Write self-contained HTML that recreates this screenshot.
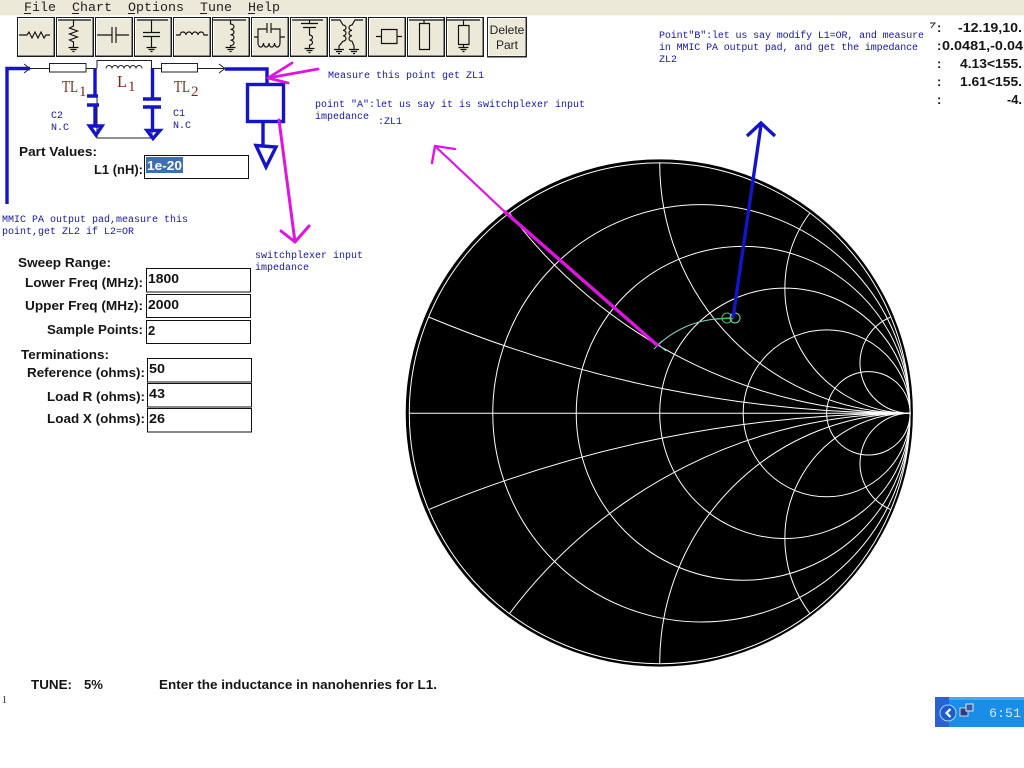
<!DOCTYPE html>
<html><head><meta charset="utf-8"><title>Smith Chart</title>
<style>
html,body{margin:0;padding:0;background:#fff;width:1024px;height:768px;overflow:hidden}
svg{display:block;position:absolute;left:0;top:0}
.m{font:13.33px "Liberation Mono",monospace;fill:#222}
.b{font:10px "Liberation Mono",monospace;fill:#1616a8}
.l{font:bold 13px "Liberation Sans",sans-serif;fill:#151515}
.v{font:bold 13px "Liberation Sans",sans-serif;fill:#111}
.r{font:16.5px "Liberation Serif",serif;fill:#7a2c1c}
.ic{fill:none;stroke:#111;stroke-width:1.15}
.g{fill:none;stroke:#fff;stroke-width:1}
</style></head><body>
<svg width="1024" height="768" viewBox="0 0 1024 768" xmlns="http://www.w3.org/2000/svg">
<defs>
<g id="bt">
<rect x="0" y="0" width="38" height="40" fill="#1a1a1a"/>
<rect x="1" y="1" width="35.5" height="37.5" fill="#fff"/>
<rect x="2" y="2" width="34" height="36" fill="#ece9d8"/>
</g>
</defs>

<!-- menu -->
<rect x="0" y="0" width="1024" height="15.5" fill="#ece9d8"/>
<text class="m" x="24" y="11">File</text><rect x="24" y="13" width="7" height="1" fill="#222"/>
<text class="m" x="72" y="11">Chart</text><rect x="72" y="13" width="7" height="1" fill="#222"/>
<text class="m" x="128" y="11">Options</text><rect x="128" y="13" width="7" height="1" fill="#222"/>
<text class="m" x="200" y="11">Tune</text><rect x="200" y="13" width="7" height="1" fill="#222"/>
<text class="m" x="248" y="11">Help</text><rect x="248" y="13" width="7" height="1" fill="#222"/>

<!-- buttons -->
<use href="#bt" x="17" y="17"/><use href="#bt" x="56" y="17"/><use href="#bt" x="95" y="17"/><use href="#bt" x="134" y="17"/>
<use href="#bt" x="173" y="17"/><use href="#bt" x="212" y="17"/><use href="#bt" x="251" y="17"/><use href="#bt" x="290" y="17"/>
<use href="#bt" x="329" y="17"/><use href="#bt" x="368" y="17"/><use href="#bt" x="407" y="17"/><use href="#bt" x="446" y="17"/>
<rect x="487" y="17" width="40" height="40.5" fill="#222"/><rect x="488" y="18" width="37.5" height="38" fill="#fff"/><rect x="489" y="19" width="36" height="36.5" fill="#ece9d8"/>
<g class="ic">
<path d="M19 35H27l2-3 3 6 3-6 3 6 3-6 3 6 2-3H50"/>
<path d="M58 20H91M73.5 20V26l-4 2 8 3-8 3 8 3-8 3 4 2V47M68.5 47.5H78.5M70.5 49.5H76.5M72.5 51.5H74.5"/>
<path d="M97 35H112M116 35H129M112 27V43M116 27V43"/>
<path d="M137 20H168M151.5 20V32.5M143 32.5H160M143 36.5H160M151.5 36.5V47M146.5 47.5H156.5M148.5 49.5H154.5M150.5 51.5H152.5"/>
<path d="M176 35H180a3 3 0 0 1 6 0a3 3 0 0 1 6 0a3 3 0 0 1 6 0a3 3 0 0 1 6 0H208"/>
<path d="M213 20H246M230.5 20V24a3.5 2.7 0 0 1 0 5.4a3.5 2.7 0 0 1 0 5.4a3.5 2.7 0 0 1 0 5.4a3.5 2.7 0 0 1 0 5.4V47M225.5 47.5H235.5M227.5 49.5H233.5M229.5 51.5H231.5"/>
<path d="M254 37H258M258 43V29H267M267 23V33M271 23V33M271 29H280V43M280 37H285M258 43a2.7 4 0 0 0 5.5 0a2.7 4 0 0 0 5.5 0a2.7 4 0 0 0 5.5 0a2.7 4 0 0 0 5.5 0"/>
<path d="M292 20H323M309.5 20V23.5M301 23.5H318M303 27.5H316M309.5 27.5V35a3 2.5 0 0 1 0 5a3 2.5 0 0 1 0 5V48M304.5 48.5H314.5M306.5 50.5H312.5M308.5 52.5H310.5"/>
<path d="M331 20H340L343 25a3 2.7 0 0 1 0 5.4a3 2.7 0 0 1 0 5.4a3 2.7 0 0 1 0 5.4L339 46V49M334 49.5H344M336 51.5H342M338 53.5H340"/>
<path d="M363 20H355L352 25a3 2.7 0 0 0 0 5.4a3 2.7 0 0 0 0 5.4a3 2.7 0 0 0 0 5.4L354 46V49M349 49.5H359M351 51.5H357M353 53.5H355"/>
<path d="M376 36.5H381M397 36.5H402M381.5 29.5H397V43.5H381.5Z"/>
<path d="M409 20H444M424 20V23.5M419.5 23.5H429.5V49.5H419.5Z"/>
<path d="M447 20H480M463.5 20V25M458.5 25.5H469V44.5H458.5ZM463.5 44.5V47M458.5 47.5H468.5M460.5 49.5H466.5M462.5 51.5H464.5"/>
</g>
<text x="507" y="34" text-anchor="middle" font-family="Liberation Sans, sans-serif" font-size="12" fill="#222">Delete</text>
<text x="507" y="49" text-anchor="middle" font-family="Liberation Sans, sans-serif" font-size="12" fill="#222">Part</text>

<!-- schematic thin -->
<g fill="none" stroke="#222" stroke-width="1">
<path d="M30 68.5H49M86 68.5H97M197 68.5H225M152 68.5H161"/>
<rect x="49.5" y="63.500" width="36.500" height="8.500" fill="#fff"/>
<rect x="161.500" y="63.500" width="36" height="8.500" fill="#fff"/>
<path d="M97 68V60.500H151.500V68M97 96V138H152V130"/>
<path d="M106 68.500a3 3 0 0 1 6 0 3 3 0 0 1 6 0 3 3 0 0 1 6 0 3 3 0 0 1 6 0 3 3 0 0 1 6 0 3 3 0 0 1 6 0"/>
<path d="M219 64L225 68.500 219 73M24 64L30 68.500 24 73"/>
</g>
<text class="r" x="62" y="92" textLength="16" lengthAdjust="spacingAndGlyphs">TL</text>
<text class="r" x="79" y="96" style="font-size:15px">1</text>
<text class="r" x="117" y="87">L</text><text class="r" x="128" y="91" style="font-size:15px">1</text>
<text class="r" x="174" y="92" textLength="16" lengthAdjust="spacingAndGlyphs">TL</text>
<text class="r" x="191" y="96" style="font-size:15px">2</text>

<!-- inputs -->
<g fill="#fff" stroke="#111" stroke-width="1">
<rect x="144.500" y="155.500" width="104" height="23"/>
<rect x="146.500" y="268.500" width="104" height="23.500"/>
<rect x="146.500" y="294.500" width="104" height="23"/>
<rect x="146.500" y="320.500" width="104" height="23"/>
<rect x="147.500" y="358.500" width="104" height="23.500"/>
<rect x="147.500" y="383.500" width="104" height="23.500"/>
<rect x="147.500" y="408.500" width="104" height="23.500"/>
</g>
<rect x="146" y="157" width="37" height="16" fill="#3f6fae"/>
<text class="v" x="147" y="170" style="fill:#fff" textLength="35" lengthAdjust="spacingAndGlyphs">1e-20</text>
<text class="v" x="148" y="283" textLength="31" lengthAdjust="spacingAndGlyphs">1800</text>
<text class="v" x="148" y="309" textLength="31" lengthAdjust="spacingAndGlyphs">2000</text>
<text class="v" x="148" y="335">2</text>
<text class="v" x="149" y="373" textLength="16" lengthAdjust="spacingAndGlyphs">50</text>
<text class="v" x="149" y="398" textLength="16" lengthAdjust="spacingAndGlyphs">43</text>
<text class="v" x="149" y="423" textLength="16" lengthAdjust="spacingAndGlyphs">26</text>

<!-- labels -->
<text class="l" x="19" y="156" textLength="78" lengthAdjust="spacingAndGlyphs">Part Values:</text>
<text class="l" x="94" y="174" textLength="49" lengthAdjust="spacingAndGlyphs">L1 (nH):</text>
<text class="l" x="18" y="267" textLength="93" lengthAdjust="spacingAndGlyphs">Sweep Range:</text>
<text class="l" x="25" y="287" textLength="118" lengthAdjust="spacingAndGlyphs">Lower Freq (MHz):</text>
<text class="l" x="25" y="310" textLength="118" lengthAdjust="spacingAndGlyphs">Upper Freq (MHz):</text>
<text class="l" x="47" y="334" textLength="96" lengthAdjust="spacingAndGlyphs">Sample Points:</text>
<text class="l" x="21" y="359" textLength="88" lengthAdjust="spacingAndGlyphs">Terminations:</text>
<text class="l" x="27" y="377" textLength="118" lengthAdjust="spacingAndGlyphs">Reference (ohms):</text>
<text class="l" x="47" y="401" textLength="98" lengthAdjust="spacingAndGlyphs">Load R (ohms):</text>
<text class="l" x="47" y="423" textLength="98" lengthAdjust="spacingAndGlyphs">Load X (ohms):</text>

<!-- annotations -->
<text class="b" x="328" y="78">Measure this point get ZL1</text>
<text class="b" x="315" y="107">point "A":let us say it is switchplexer input</text>
<text class="b" x="315" y="119">impedance</text>
<text class="b" x="378" y="124">:ZL1</text>
<text class="b" x="2" y="222">MMIC PA output pad,measure this</text>
<text class="b" x="2" y="234">point,get ZL2 if L2=OR</text>
<text class="b" x="255" y="258">switchplexer input</text>
<text class="b" x="255" y="270">impedance</text>
<text class="b" x="51" y="118">C2</text><text class="b" x="51" y="130">N.C</text>
<text class="b" x="173" y="116">C1</text><text class="b" x="173" y="128">N.C</text>
<text class="b" x="659" y="38" textLength="265" lengthAdjust="spacing">Point"B":let us say modify L1=OR, and measure</text>
<text class="b" x="659" y="50" textLength="259" lengthAdjust="spacing">in MMIC PA output pad, and get the impedance</text>
<text class="b" x="659" y="62">ZL2</text>

<!-- right readout -->
<text class="l" x="958" y="32" textLength="64" lengthAdjust="spacingAndGlyphs">-12.19,10.</text>
<text class="l" x="942" y="50" textLength="81" lengthAdjust="spacingAndGlyphs">0.0481,-0.04</text>
<text class="l" x="960" y="68" textLength="62" lengthAdjust="spacingAndGlyphs">4.13&lt;155.</text>
<text class="l" x="960" y="86" textLength="62" lengthAdjust="spacingAndGlyphs">1.61&lt;155.</text>
<text class="l" x="1007" y="104" textLength="15" lengthAdjust="spacingAndGlyphs">-4.</text>
<text class="l" x="937" y="32">:</text><text class="l" x="937" y="50">:</text><text class="l" x="937" y="68">:</text><text class="l" x="937" y="86">:</text><text class="l" x="937" y="104">:</text>
<path d="M930 23H935L931 28" fill="none" stroke="#222" stroke-width="1"/>

<!-- Smith chart -->
<circle cx="659.300" cy="413" r="253.600" fill="#000"/>
<g class="g">
<circle cx="659.700" cy="413.300" r="250.400"/>
<path d="M409.300 413.300H910.100"/>
<circle cx="701.430" cy="413.300" r="208.670"/>
<circle cx="743.170" cy="413.300" r="166.930"/>
<circle cx="784.900" cy="413.300" r="125.200"/>
<circle cx="826.630" cy="413.300" r="83.470"/>
<circle cx="868.370" cy="413.300" r="41.730"/>
<path d="M910.100 413.300A1252 1252 0 0 1 428.600 317"/>
<path d="M910.100 413.300A1252 1252 0 0 0 428.600 509.600"/>
<path d="M910.100 413.300A500.800 500.800 0 0 1 509.500 113" style="display:none"/>
<path d="M910.100 413.300A500.800 500.800 0 0 1 509.500 213"/>
<path d="M910.100 413.300A500.800 500.800 0 0 0 509.500 613.600"/>
<path d="M910.100 413.300A250.400 250.400 0 0 1 659.700 162.900"/>
<path d="M910.100 413.300A250.400 250.400 0 0 0 659.700 663.700"/>
<path d="M910.100 413.300A125.200 125.200 0 0 1 809.900 213"/>
<path d="M910.100 413.300A125.200 125.200 0 0 0 809.900 613.600"/>
<path d="M910.100 413.300A50.080 50.080 0 0 1 890.800 317"/>
<path d="M910.100 413.300A50.080 50.080 0 0 0 890.800 509.600"/>
</g>
<!-- trace -->
<path d="M658 345Q672 332 690 325Q708 318 733 318" fill="none" stroke="#7fd8c8" stroke-width="1"/>
<path d="M716 319L733 318" fill="none" stroke="#3fc060" stroke-width="1.400"/>
<circle cx="727" cy="318" r="5" fill="none" stroke="#3fc060" stroke-width="1"/>
<circle cx="735" cy="318" r="5" fill="none" stroke="#7fd8c8" stroke-width="1"/>
<path d="M654 349L662 341M654 341L666 351" fill="none" stroke="#7fd8c8" stroke-width="1"/>

<!-- blue overlays -->
<g fill="none" stroke="#1414c8" stroke-width="3.400" stroke-linejoin="miter">
<path d="M7 204V68.500H30"/>
<path d="M225 69H267V85"/>
<rect x="247.500" y="84.500" width="36" height="37"/>
<path d="M263 121V145"/>
<path d="M256 145.500L276 147L266 167Z"/>
<path d="M95 68V96M87 96H98M87 105H99M95 105V125"/>
<path d="M89.500 126H102L96 135Z"/>
<path d="M152.500 68V99M143 99H161M143 107H161M152.500 107V130"/>
<path d="M147 130.500H160L153 138.500Z"/>
<path d="M733 318L761 125M747 136L761 123L775 136"/>
</g>

<!-- magenta overlays -->
<g fill="none" stroke="#e014e0" stroke-linecap="round">
<path d="M657 345L505 212" stroke-width="3.400"/>
<path d="M505 212L436 147" stroke-width="2.200"/>
<path d="M435 146L455 149M435 146L432 163" stroke-width="2.400"/>
<path d="M268 78L318 69M268 78L292 63M268 78L288 83" stroke-width="2.800"/>
<path d="M279 120L295 242M295 242L281 231M295 242L309 226" stroke-width="3"/>
</g>

<!-- status -->
<text class="l" x="31" y="689" textLength="41" lengthAdjust="spacingAndGlyphs">TUNE:</text>
<text class="l" x="84" y="689" textLength="19" lengthAdjust="spacingAndGlyphs">5%</text>
<text class="l" x="159" y="689" textLength="278" lengthAdjust="spacingAndGlyphs">Enter the inductance in nanohenries for L1.</text>
<text x="2" y="703" font-family="Liberation Serif, serif" font-size="10" fill="#222">1</text>

<!-- tray -->
<rect x="935" y="697" width="89" height="30" fill="#1a8ee6"/>
<rect x="935" y="697" width="89" height="3" fill="#46a8ee"/>
<rect x="935" y="697" width="14" height="30" fill="#2a62d0"/>
<circle cx="948" cy="713" r="8" fill="#1a5fc8" stroke="#a8d0f4" stroke-width="1"/>
<path d="M950.500 709L946.500 713L950.500 717" fill="none" stroke="#fff" stroke-width="2.200"/>
<rect x="960" y="708" width="8" height="8" fill="#2b3f7c" stroke="#c8d6ea" stroke-width="1"/>
<rect x="966" y="704" width="7" height="7" fill="#3c5ca0" stroke="#dde6f2" stroke-width="1"/>
<text x="989" y="717" font-family="Liberation Mono, monospace" font-size="13.33" fill="#cfe6fa">6:51</text>
</svg>
</body></html>
